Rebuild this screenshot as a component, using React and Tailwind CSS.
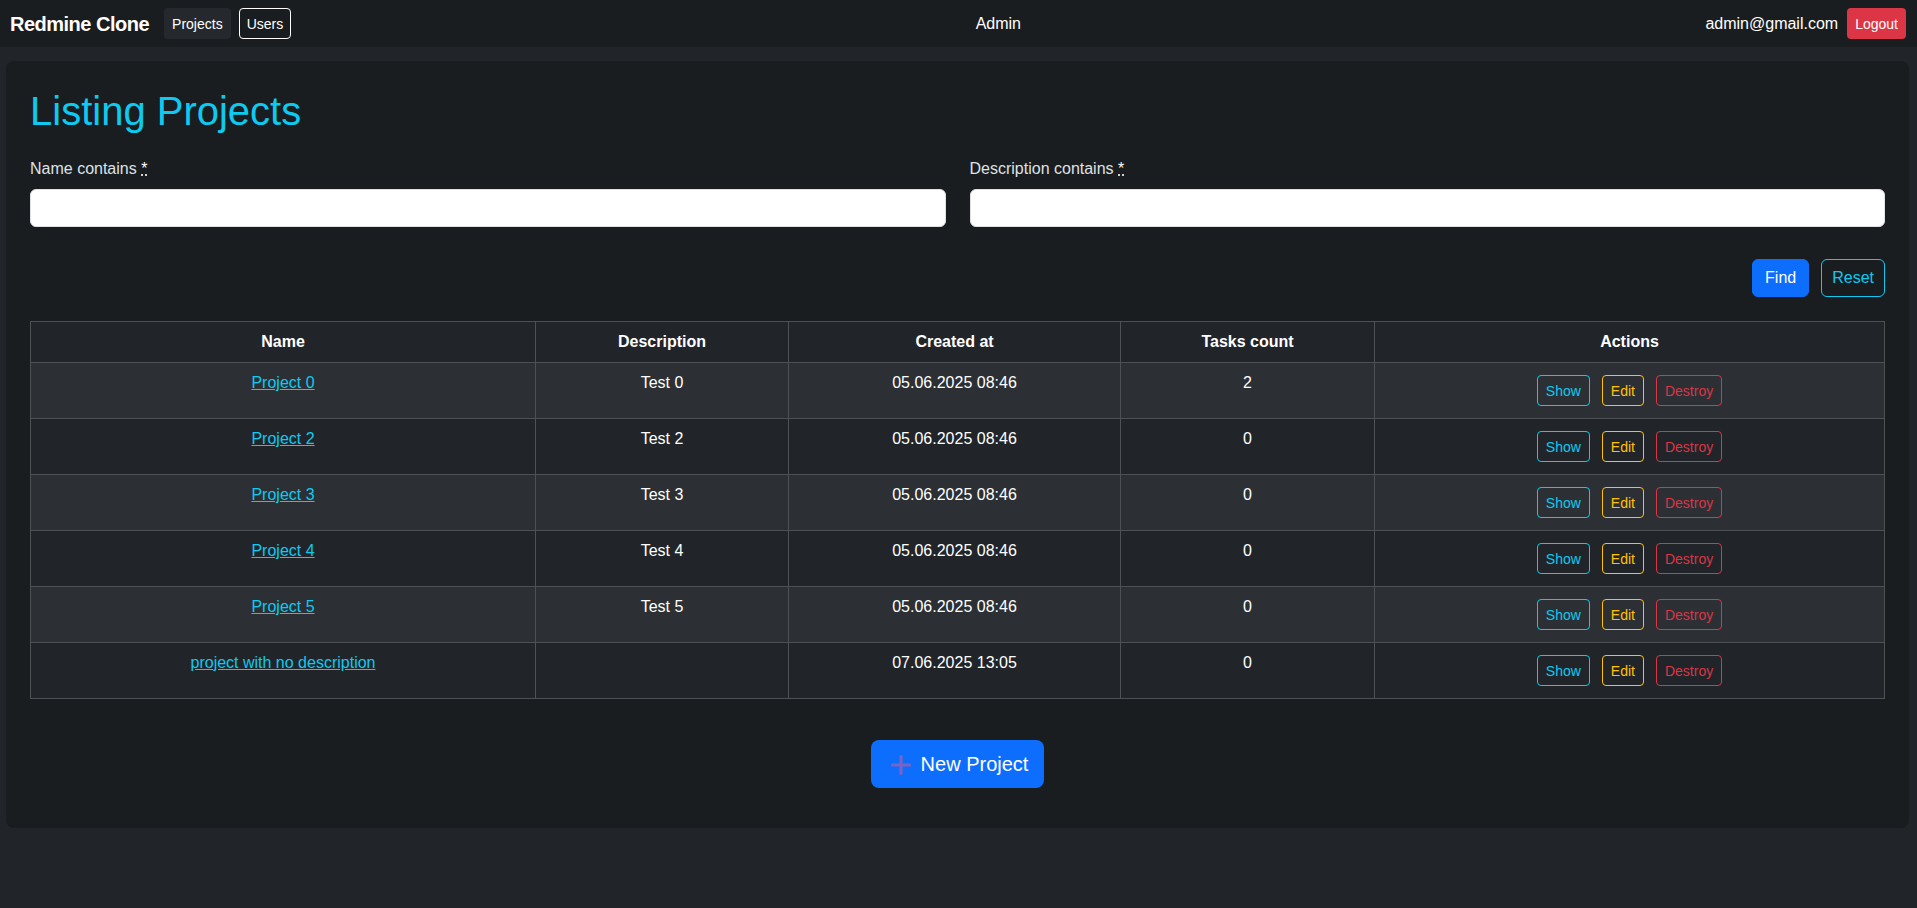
import React from 'react'

const projects = [
  { name: 'Project 0', description: 'Test 0', createdAt: '05.06.2025 08:46', tasks: 2 },
  { name: 'Project 2', description: 'Test 2', createdAt: '05.06.2025 08:46', tasks: 0 },
  { name: 'Project 3', description: 'Test 3', createdAt: '05.06.2025 08:46', tasks: 0 },
  { name: 'Project 4', description: 'Test 4', createdAt: '05.06.2025 08:46', tasks: 0 },
  { name: 'Project 5', description: 'Test 5', createdAt: '05.06.2025 08:46', tasks: 0 },
  { name: 'project with no description', description: '', createdAt: '07.06.2025 13:05', tasks: 0 },
]

function PlusIcon() {
  return (
    <svg width="24" height="24" viewBox="0 0 24 24" fill="none">
      <path d="M14 4.5v17M5.5 13h17" stroke="#7a63c6" strokeWidth="3.2" strokeLinecap="round" />
    </svg>
  )
}

function Navbar() {
  return (
    <nav className="flex items-center justify-between h-[47px] pl-[10px] pr-[11px] bg-[#1a1d20]">
      <div className="flex items-center">
        <span className="text-[20px] leading-[30px] font-bold tracking-[-0.5px] text-white mr-[15px]">Redmine Clone</span>
        <a href="#" className="inline-flex items-center h-[31px] px-2 rounded-[4px] bg-[#25292d] text-sm text-white">
          Projects
        </a>
        <a href="#" className="inline-flex items-center h-[31px] px-[7px] ml-2 rounded-[4px] border border-white text-sm text-white">
          Users
        </a>
      </div>
      <span className="text-base text-white">Admin</span>
      <div className="flex items-center">
        <span className="text-base text-white mr-[9px]">admin@gmail.com</span>
        <button className="inline-flex items-center h-[31px] px-2 rounded-[4px] bg-[#dc3545] text-sm text-white">
          Logout
        </button>
      </div>
    </nav>
  )
}

function Filters() {
  return (
    <>
      <div className="grid grid-cols-2 gap-6">
        <div>
          <label className="block mb-2 text-base leading-6 text-[#dee2e6]">
            Name contains <abbr title="required" className="underline decoration-dotted text-white">*</abbr>
          </label>
          <input className="block w-full h-[38px] bg-white border border-[#dee2e6] rounded-md px-3 text-black" />
        </div>
        <div>
          <label className="block mb-2 text-base leading-6 text-[#dee2e6]">
            Description contains <abbr title="required" className="underline decoration-dotted text-white">*</abbr>
          </label>
          <input className="block w-full h-[38px] bg-white border border-[#dee2e6] rounded-md px-3 text-black" />
        </div>
      </div>
      <div className="flex justify-end gap-3 mt-8 mb-6">
        <button className="h-[38px] px-3 rounded-md bg-[#0d6efd] border border-[#0d6efd] text-base text-white">Find</button>
        <button className="h-[38px] px-[10px] rounded-md border border-[#0dcaf0] text-base text-[#0dcaf0]">Reset</button>
      </div>
    </>
  )
}

function ProjectsTable() {
  return (
    <table className="w-full table-fixed border-collapse text-white">
      <colgroup>
        <col className="w-[505px]" />
        <col className="w-[253px]" />
        <col className="w-[332px]" />
        <col className="w-[254px]" />
        <col />
      </colgroup>
      <thead>
        <tr className="bg-[#212529]">
          <th className="border border-[#4d5154] p-2 leading-6 font-bold text-center">Name</th>
          <th className="border border-[#4d5154] p-2 leading-6 font-bold text-center">Description</th>
          <th className="border border-[#4d5154] p-2 leading-6 font-bold text-center">Created at</th>
          <th className="border border-[#4d5154] p-2 leading-6 font-bold text-center">Tasks count</th>
          <th className="border border-[#4d5154] p-2 leading-6 font-bold text-center">Actions</th>
        </tr>
      </thead>
      <tbody>
        {projects.map((p, i) => (
          <tr key={p.name} className={i % 2 === 0 ? 'bg-[#2c3034]' : 'bg-[#212529]'}>
            <td className="border border-[#4d5154] p-2 leading-6 text-center align-top">
              <a href="#" className="text-[#0dcaf0] underline">{p.name}</a>
            </td>
            <td className="border border-[#4d5154] p-2 leading-6 text-center align-top">{p.description}</td>
            <td className="border border-[#4d5154] p-2 leading-6 text-center align-top">{p.createdAt}</td>
            <td className="border border-[#4d5154] p-2 leading-6 text-center align-top">{p.tasks}</td>
            <td className="border border-[#4d5154] p-2 align-top">
              <div className="flex justify-center gap-3 py-1">
                <a href="#" className="inline-flex items-center h-[31px] px-2 rounded-[4px] border border-[#0dcaf0] text-sm text-[#0dcaf0]">Show</a>
                <a href="#" className="inline-flex items-center h-[31px] px-2 rounded-[4px] border border-[#ffc107] text-sm text-[#ffc107]">Edit</a>
                <button className="inline-flex items-center h-[31px] px-2 rounded-[4px] border border-[#dc3545] text-sm text-[#dc3545]">Destroy</button>
              </div>
            </td>
          </tr>
        ))}
      </tbody>
    </table>
  )
}

export default function App() {
  return (
    <div className="min-h-screen bg-[#212529] font-['Liberation_Sans',Arial,sans-serif] text-[#dee2e6]">
      <Navbar />
      <main className="mt-[14px] ml-[6px] mr-[8px] bg-[#1a1d20] rounded-lg p-6">
        <h1 className="mt-[2px] mb-[22px] text-[40px] leading-[48px] font-normal text-[#0dcaf0]">Listing Projects</h1>
        <Filters />
        <ProjectsTable />
        <div className="flex justify-center mt-[41px] mb-4">
          <a href="#" className="inline-flex items-center h-[48px] px-4 rounded-lg bg-[#0d6efd] text-[20px] text-white">
            <PlusIcon />
            <span className="ml-[10px]">New Project</span>
          </a>
        </div>
      </main>
    </div>
  )
}
